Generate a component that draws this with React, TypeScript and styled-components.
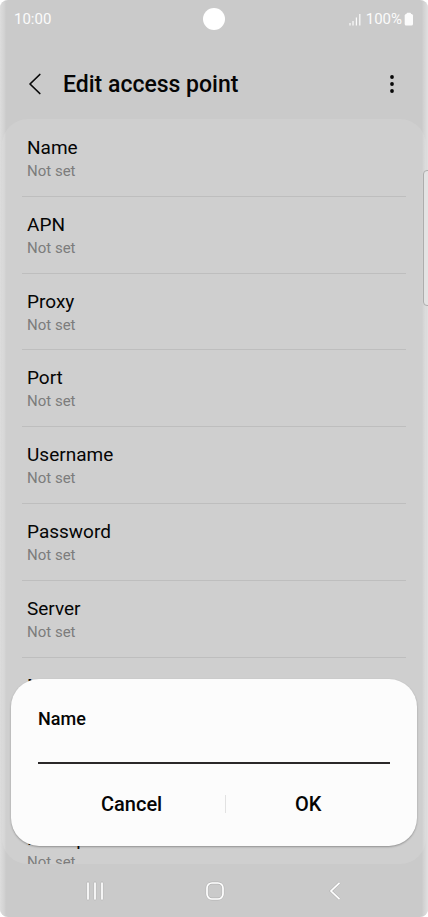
import React from "react";
import styled, { createGlobalStyle } from "styled-components";

const GlobalStyle = createGlobalStyle`
  * { box-sizing: border-box; }
  body { margin: 0; background: #fff; font-family: Roboto, sans-serif; color: #050505; }
  button { font: inherit; color: inherit; background: none; border: 0; padding: 0; cursor: pointer; }
  svg { display: block; }
`;

const Screen = styled.div`
  position: relative;
  display: flex;
  flex-direction: column;
  height: 100vh;
  overflow: hidden;
  border-radius: 8px;
  background: #cacaca;
`;

const EdgeShine = styled.div`
  position: absolute;
  inset: 0;
  pointer-events: none;
  border-radius: inherit;
  background:
    linear-gradient(to right, rgba(255, 255, 255, 0.36), rgba(255, 255, 255, 0.12) 5px, transparent 6px),
    linear-gradient(to left, rgba(255, 255, 255, 0.42), rgba(255, 255, 255, 0.12) 5px, transparent 6px);
`;

const StatusBar = styled.div`
  display: grid;
  grid-template-columns: 1fr auto 1fr;
  align-items: center;
  flex: none;
  height: 38px;
  padding: 0 14px;
  font-size: 15px;
  line-height: 20px;
  color: #fbfbfb;
`;

const Camera = styled.span`
  width: 22px;
  height: 22px;
  border-radius: 50%;
  background: #fff;
`;

const StatusIcons = styled.div`
  display: flex;
  justify-content: flex-end;
  align-items: center;
  gap: 5px;
`;

const Level = styled.span`
  display: flex;
  align-items: center;
  gap: 2px;
`;

const Header = styled.header`
  display: flex;
  align-items: center;
  flex: none;
  height: 81px;
  padding: 10px 20px 0 19px;
`;

const IconButton = styled.button`
  display: grid;
  place-items: center;
  width: 32px;
  height: 40px;
`;

const Title = styled.h1`
  flex: 1;
  margin: 0 0 0 12px;
  padding-top: 2px;
  font-size: 23px;
  font-weight: 500;
  line-height: 32px;
`;

const Panel = styled.main`
  flex: 1;
  min-height: 0;
  overflow: hidden;
  margin: 0 2px;
  border-radius: 26px;
  background: #cfcfcf;
`;

const List = styled.ul`
  display: grid;
  grid-auto-rows: 1fr;
  min-height: 769px;
  list-style: none;
  margin: 0;
  padding: 1px 20px 0;
`;

const Item = styled.li`
  border-bottom: 1px solid #bebebe;
`;

const Row = styled.button`
  display: flex;
  flex-direction: column;
  gap: 1px;
  width: 100%;
  padding: 16px 5px 12px;
  text-align: left;
`;

const Label = styled.span`
  font-size: 19px;
  line-height: 24px;
`;

const Value = styled.span`
  font-size: 15px;
  line-height: 20px;
  color: #7c7c7c;
`;

const EdgeHandle = styled.div`
  position: absolute;
  top: 170px;
  right: -4px;
  width: 9px;
  height: 136px;
  border: 1px solid #adadad;
  border-radius: 4px;
  background: #e3e3e3;
`;

const Dialog = styled.form`
  position: absolute;
  left: 11px;
  right: 11px;
  bottom: 71px;
  padding: 28px 27px 20px;
  border-radius: 28px;
  background: #fcfcfc;
  box-shadow: 0 1px 2px rgba(0, 0, 0, 0.3);
`;

const FieldLabel = styled.label`
  display: block;
  font-size: 18px;
  font-weight: 500;
  line-height: 24px;
`;

const Field = styled.input`
  display: block;
  width: 100%;
  height: 33px;
  padding: 0;
  border: 0;
  border-bottom: 2px solid #2b2829;
  border-radius: 0;
  outline: 0;
  background: transparent;
  font: 18px/24px Roboto, sans-serif;
`;

const Actions = styled.div`
  display: grid;
  grid-template-columns: 8fr 1px 7fr;
  align-items: center;
  margin-top: 18px;
`;

const Action = styled.button`
  height: 44px;
  font-size: 20px;
  font-weight: 500;
`;

const ActionDivider = styled.span`
  height: 18px;
  background: #e2e2e2;
`;

const NavBar = styled.nav`
  display: grid;
  grid-template-columns: repeat(3, 120px);
  justify-content: center;
  flex: none;
  height: 53px;
  padding-left: 2px;
`;

const NavButton = styled.button`
  display: grid;
  place-items: center;
`;

const settings = ["Name", "APN", "Proxy", "Port", "Username", "Password", "Server", "MMSC", "MMS proxy", "MMS port"];

const SignalIcon = () => (
  <svg width="12" height="13" viewBox="0 0 12 13" fill="none" stroke="#fbfbfb" strokeWidth="1.2" aria-hidden="true">
    <path d="M1 10v2.500M4 8v4.500M7.400 4.500v8M10.800 1v11.500" />
  </svg>
);

const BatteryIcon = () => (
  <svg width="10" height="14" viewBox="0 0 10 14" fill="#fbfbfb" aria-hidden="true">
    <rect x="2.500" y="0.800" width="4.500" height="3" rx="1" />
    <rect x="0.700" y="2" width="8.300" height="11.500" rx="1.500" />
  </svg>
);

const BackIcon = () => (
  <svg width="14" height="22" viewBox="0 0 14 22" fill="none" stroke="#080808" strokeWidth="1.700" strokeLinecap="round" strokeLinejoin="round" aria-hidden="true">
    <path d="M11.800 1.500 2 11l9.800 9.500" />
  </svg>
);

const MoreIcon = () => (
  <svg width="6" height="20" viewBox="0 0 6 20" fill="#080808" aria-hidden="true">
    <circle cx="3" cy="3" r="1.900" />
    <circle cx="3" cy="10" r="1.900" />
    <circle cx="3" cy="17" r="1.900" />
  </svg>
);

const RecentsIcon = () => (
  <svg width="20" height="20" viewBox="0 0 20 20" fill="none" strokeLinecap="round" aria-hidden="true">
    <path d="M3 2v16M10 2v16M17 2v16" stroke="#b4b4b4" strokeWidth="2.800" />
    <path d="M3 2v16M10 2v16M17 2v16" stroke="#fff" strokeWidth="1.700" />
  </svg>
);

const HomeIcon = () => (
  <svg width="20" height="20" viewBox="0 0 20 20" fill="none" aria-hidden="true">
    <rect x="2" y="2" width="16" height="16" rx="5" stroke="#b4b4b4" strokeWidth="2.800" />
    <rect x="2" y="2" width="16" height="16" rx="5" stroke="#fff" strokeWidth="1.700" />
  </svg>
);

const NavBackIcon = () => (
  <svg width="14" height="20" viewBox="0 0 14 20" fill="none" aria-hidden="true">
    <path d="M11.500 1.800 3 10l8.500 8.200" stroke="#b4b4b4" strokeWidth="2.800" />
    <path d="M11.500 1.800 3 10l8.500 8.200" stroke="#fff" strokeWidth="1.700" />
  </svg>
);

export default function App() {
  return (
    <>
      <GlobalStyle />
      <Screen>
        <StatusBar>
          <time>10:00</time>
          <Camera />
          <StatusIcons>
            <SignalIcon />
            <Level>
              100%
              <BatteryIcon />
            </Level>
          </StatusIcons>
        </StatusBar>
        <Header>
          <IconButton aria-label="Back">
            <BackIcon />
          </IconButton>
          <Title>Edit access point</Title>
          <IconButton aria-label="More options">
            <MoreIcon />
          </IconButton>
        </Header>
        <Panel>
          <List>
            {settings.map((name) => (
              <Item key={name}>
                <Row>
                  <Label>{name}</Label>
                  <Value>Not set</Value>
                </Row>
              </Item>
            ))}
          </List>
        </Panel>
        <NavBar>
          <NavButton aria-label="Recent apps">
            <RecentsIcon />
          </NavButton>
          <NavButton aria-label="Home">
            <HomeIcon />
          </NavButton>
          <NavButton aria-label="Back">
            <NavBackIcon />
          </NavButton>
        </NavBar>
        <EdgeShine />
        <EdgeHandle />
        <Dialog role="dialog" aria-labelledby="field-label" onSubmit={(event) => event.preventDefault()}>
          <FieldLabel id="field-label" htmlFor="field">
            Name
          </FieldLabel>
          <Field id="field" type="text" />
          <Actions>
            <Action type="button">Cancel</Action>
            <ActionDivider />
            <Action type="submit">OK</Action>
          </Actions>
        </Dialog>
      </Screen>
    </>
  );
}
